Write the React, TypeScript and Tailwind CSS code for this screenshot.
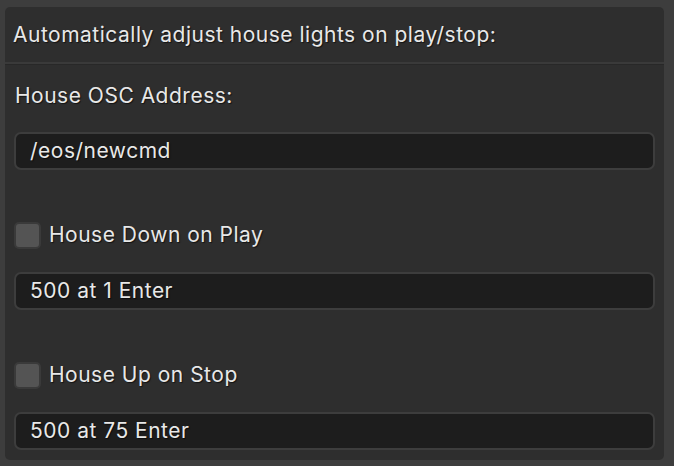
import React from "react";

const shadow = "[text-shadow:1px_1px_1px_rgba(0,0,0,0.6)]";
const txt = "text-[21px] tracking-[0.5px] text-[#e8e8e8]";

function Field({ value }: { value: string }) {
  return (
    <div className={`h-[38px] rounded-[7px] border-2 border-[#3d3d3d] bg-[#1d1d1d] flex items-center pl-[14px] ${txt}`}>
      <span className={shadow}>{value}</span>
    </div>
  );
}

function Check({ label }: { label: string }) {
  return (
    <div className="h-[38px] flex items-center">
      <div className="w-[27px] h-[27px] rounded-[5px] bg-[#545454] border-2 border-[#3a3a3a]" />
      <span className={`ml-[8px] ${txt} ${shadow}`}>{label}</span>
    </div>
  );
}

export default function App() {
  return (
    <div
      className="w-[674px] h-[466px] bg-[#3d3d3d] pl-[5px] pr-[10px] pt-[7px] pb-[6px]"
      style={{ fontFamily: "Inter, 'Noto Sans', sans-serif" }}
    >
      <div className="h-full rounded-[5px] bg-[#2e2e2e] flex flex-col">
        <div className={`h-[55px] flex items-center pl-[8px] ${txt}`}>
          <span className={shadow}>Automatically adjust house lights on play/stop:</span>
        </div>
        <div className="h-[2px] bg-[#3a3a3a]" />
        <div className="h-[1px] bg-[#282828]" />
        <div className="pl-[9px] pr-[9px] pt-[12px] flex flex-col">
          <div className={`h-[38px] flex items-center pl-[1px] ${txt}`}>
            <span className={shadow}>House OSC Address:</span>
          </div>
          <div className="mt-[17px]">
            <Field value="/eos/newcmd" />
          </div>
          <div className="mt-[46px]">
            <Check label="House Down on Play" />
          </div>
          <div className="mt-[18px]">
            <Field value="500 at 1 Enter" />
          </div>
          <div className="mt-[46px]">
            <Check label="House Up on Stop" />
          </div>
          <div className="mt-[18px]">
            <Field value="500 at 75 Enter" />
          </div>
        </div>
      </div>
    </div>
  );
}
